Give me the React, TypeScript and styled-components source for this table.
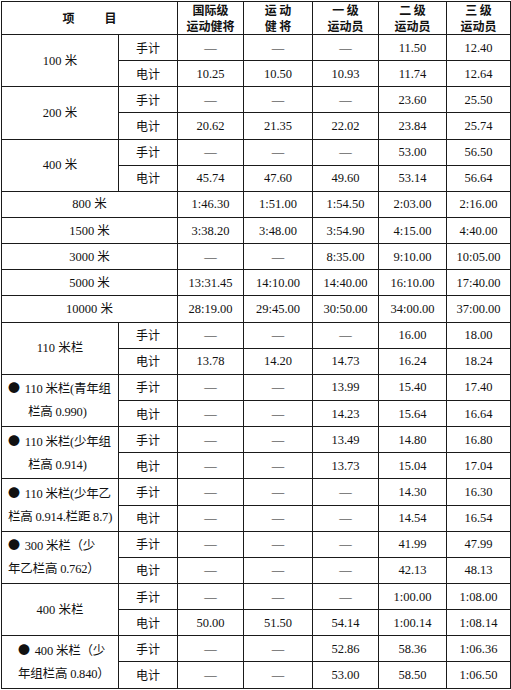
import React from 'react';
import styled, { createGlobalStyle } from 'styled-components';

const GlobalStyle = createGlobalStyle`
  body {
    margin: 0;
    background: #fff;
    font-family: "Liberation Serif", "Noto Sans CJK SC", serif;
    color: #111;
  }
`;

const Sheet = styled.table`
  margin: 1px 0 0 1px;
  border-collapse: collapse;
  table-layout: fixed;
  width: 509px;
  font-size: 12.5px;

  td,
  th {
    border: 1px solid #1a1a1a;
    padding: 0;
    text-align: center;
    vertical-align: middle;
    white-space: nowrap;
    overflow: hidden;
  }
`;

const HeadRow = styled.tr`
  height: 33px;
`;

const HeadCell = styled.th`
  font-family: "Noto Sans CJK SC", sans-serif;
  font-weight: 700;
  font-size: 12px;
  line-height: 16px;
`;

const ItemTitle = styled.span`
  display: inline-flex;
  gap: 30px;
`;

const Row = styled.tr`
  height: 26.15px;
`;

const Cell = styled.td`
  line-height: 16px;
`;

const TimingCell = styled.td`
  font-family: "Noto Sans CJK SC", sans-serif;
  font-size: 12px;
  line-height: 16px;
`;

const EventCell = styled.td`
  line-height: 16px;
`;

const WrapCell = styled.td`
  && {
    text-align: left;
  }
`;

const Line = styled.div<{ $indent: number }>`
  height: 25px;
  line-height: 25px;
  padding-left: ${({ $indent }) => $indent}px;
  letter-spacing: -0.2px;
`;

const Bullet = styled.span`
  margin-right: 5px;
  font-family: "Noto Sans CJK SC", sans-serif;
  font-size: 12px;
`;

type Pair = { hand: string[]; elec: string[] };

type Event =
  | { kind: 'single'; name: string; values: string[] }
  | { kind: 'pair'; name: string; pair: Pair }
  | { kind: 'note'; lines: [string, string]; indents: [number, number]; pair: Pair };

const D = '—';

const events: Event[] = [
  { kind: 'pair', name: '100 米', pair: { hand: [D, D, D, '11.50', '12.40'], elec: ['10.25', '10.50', '10.93', '11.74', '12.64'] } },
  { kind: 'pair', name: '200 米', pair: { hand: [D, D, D, '23.60', '25.50'], elec: ['20.62', '21.35', '22.02', '23.84', '25.74'] } },
  { kind: 'pair', name: '400 米', pair: { hand: [D, D, D, '53.00', '56.50'], elec: ['45.74', '47.60', '49.60', '53.14', '56.64'] } },
  { kind: 'single', name: '800 米', values: ['1:46.30', '1:51.00', '1:54.50', '2:03.00', '2:16.00'] },
  { kind: 'single', name: '1500 米', values: ['3:38.20', '3:48.00', '3:54.90', '4:15.00', '4:40.00'] },
  { kind: 'single', name: '3000 米', values: [D, D, '8:35.00', '9:10.00', '10:05.00'] },
  { kind: 'single', name: '5000 米', values: ['13:31.45', '14:10.00', '14:40.00', '16:10.00', '17:40.00'] },
  { kind: 'single', name: '10000 米', values: ['28:19.00', '29:45.00', '30:50.00', '34:00.00', '37:00.00'] },
  { kind: 'pair', name: '110 米栏', pair: { hand: [D, D, D, '16.00', '18.00'], elec: ['13.78', '14.20', '14.73', '16.24', '18.24'] } },
  {
    kind: 'note',
    lines: ['110 米栏(青年组', '栏高 0.990)'],
    indents: [6, 26],
    pair: { hand: [D, D, '13.99', '15.40', '17.40'], elec: [D, D, '14.23', '15.64', '16.64'] },
  },
  {
    kind: 'note',
    lines: ['110 米栏(少年组', '栏高 0.914)'],
    indents: [6, 26],
    pair: { hand: [D, D, '13.49', '14.80', '16.80'], elec: [D, D, '13.73', '15.04', '17.04'] },
  },
  {
    kind: 'note',
    lines: ['110 米栏(少年乙', '栏高 0.914.栏距 8.7)'],
    indents: [6, 6],
    pair: { hand: [D, D, D, '14.30', '16.30'], elec: [D, D, D, '14.54', '16.54'] },
  },
  {
    kind: 'note',
    lines: ['300 米栏（少', '年乙栏高 0.762）'],
    indents: [6, 6],
    pair: { hand: [D, D, D, '41.99', '47.99'], elec: [D, D, D, '42.13', '48.13'] },
  },
  { kind: 'pair', name: '400 米栏', pair: { hand: [D, D, D, '1:00.00', '1:08.00'], elec: ['50.00', '51.50', '54.14', '1:00.14', '1:08.14'] } },
  {
    kind: 'note',
    lines: ['400 米栏（少', '年组栏高 0.840）'],
    indents: [16, 16],
    pair: { hand: [D, D, '52.86', '58.36', '1:06.36'], elec: [D, D, '53.00', '58.50', '1:06.50'] },
  },
];

const Values = ({ values }: { values: string[] }) => (
  <>
    {values.map((v, i) => (
      <Cell key={i}>{v}</Cell>
    ))}
  </>
);

const EventRows = ({ ev }: { ev: Event }) => {
  if (ev.kind === 'single') {
    return (
      <Row>
        <EventCell colSpan={2}>{ev.name}</EventCell>
        <Values values={ev.values} />
      </Row>
    );
  }

  const first =
    ev.kind === 'pair' ? (
      <EventCell rowSpan={2}>{ev.name}</EventCell>
    ) : (
      <WrapCell rowSpan={2}>
        <Line $indent={ev.indents[0]}>
          <Bullet>●</Bullet>
          {ev.lines[0]}
        </Line>
        <Line $indent={ev.indents[1]}>{ev.lines[1]}</Line>
      </WrapCell>
    );

  return (
    <>
      <Row>
        {first}
        <TimingCell>手计</TimingCell>
        <Values values={ev.pair.hand} />
      </Row>
      <Row>
        <TimingCell>电计</TimingCell>
        <Values values={ev.pair.elec} />
      </Row>
    </>
  );
};

const App = () => {
  return (
    <>
      <GlobalStyle />
      <Sheet>
        <colgroup>
          <col style={{ width: 117 }} />
          <col style={{ width: 59 }} />
          <col style={{ width: 66 }} />
          <col style={{ width: 69 }} />
          <col style={{ width: 66 }} />
          <col style={{ width: 68 }} />
          <col style={{ width: 64 }} />
        </colgroup>
        <thead>
          <HeadRow>
            <HeadCell colSpan={2}>
              <ItemTitle>
                <span>项</span>
                <span>目</span>
              </ItemTitle>
            </HeadCell>
            <HeadCell>
              国际级
              <br />
              运动健将
            </HeadCell>
            <HeadCell>
              运 动
              <br />
              健 将
            </HeadCell>
            <HeadCell>
              一 级
              <br />
              运动员
            </HeadCell>
            <HeadCell>
              二 级
              <br />
              运动员
            </HeadCell>
            <HeadCell>
              三 级
              <br />
              运动员
            </HeadCell>
          </HeadRow>
        </thead>
        <tbody>
          {events.map((ev, i) => (
            <EventRows key={i} ev={ev} />
          ))}
        </tbody>
      </Sheet>
    </>
  );
};

export default App;
